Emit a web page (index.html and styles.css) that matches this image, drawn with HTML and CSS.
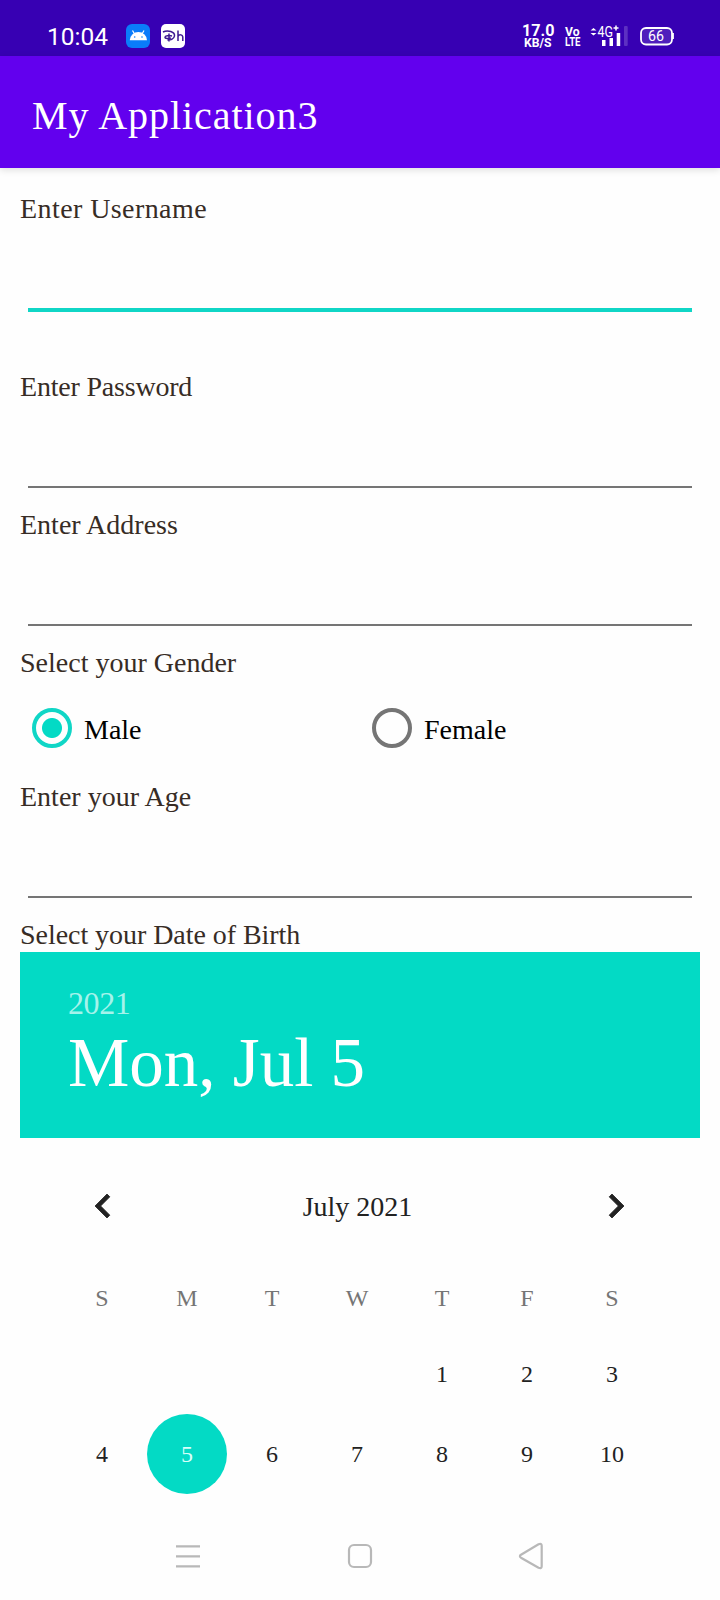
FILE: index.html
```html
<!DOCTYPE html>
<html lang="en">
<head>
<meta charset="utf-8">
<title>My Application3</title>
<link rel="stylesheet" href="styles.css">
</head>
<body>
<div class="screen">
  <header class="status">
    <div class="status-left">
      <span class="clock">10:04</span>
      <svg class="app-icon" width="24" height="24" viewBox="0 0 24 24">
        <rect width="24" height="24" rx="6" fill="#0a7cfa"/>
        <path d="M3.800 16.200a8.600 8.200 0 0 1 17.200 0z" fill="#fff"/>
        <path d="M6.500 6.500l2 3.500M18 6.500l-2 3.500" stroke="#fff" stroke-width="1.200"/>
        <circle cx="8.700" cy="13" r=".8" fill="#0a7cfa"/><circle cx="16" cy="13" r=".8" fill="#0a7cfa"/>
      </svg>
      <svg class="app-icon" width="24" height="24" viewBox="0 0 24 24">
        <rect width="24" height="24" rx="5" fill="#fff"/>
        <path d="M2 8C7 5.500 14 8 13.500 12c-.5 3.200-4.500 4.300-7 4M8 9.500v8M11 12c-3-.8-7-.3-7 1.300S8 15 10 13.800M17 6.500v10.500M17 12.500c.8-2.300 4.800-2.300 4.800.8V17" fill="none" stroke="#3d1a91" stroke-width="1.500"/>
      </svg>
    </div>
    <svg class="signals" width="154" height="30" viewBox="520 20 154 30">
      <g fill="#fff" font-family="Roboto, sans-serif" font-weight="700">
        <text x="522" y="36" font-size="16" textLength="32.500" lengthAdjust="spacingAndGlyphs">17.0</text>
        <text x="524" y="47" font-size="12" textLength="27.500" lengthAdjust="spacingAndGlyphs">KB/S</text>
        <text x="565" y="36" font-size="13.500" textLength="14.500" lengthAdjust="spacingAndGlyphs">Vo</text>
        <text x="565" y="46" font-size="13" textLength="15.500" lengthAdjust="spacingAndGlyphs">LTE</text>
      </g>
      <g fill="#fff" font-family="Roboto, sans-serif">
        <text x="597.500" y="37" font-size="14" textLength="15.500" lengthAdjust="spacingAndGlyphs">4G</text>
        <text x="648" y="41" font-size="14.500" textLength="16" lengthAdjust="spacingAndGlyphs">66</text>
      </g>
      <path d="M590.500 30.500l3-2.600 3 2.600zM590.500 33l3 2.600 3-2.600z" fill="#fff"/>
      <path d="M613.500 28h5M616 25.500v5" fill="none" stroke="#fff" stroke-width="1.500"/>
      <path d="M602 40h3.500v6H602zM609.500 38h3.500v8h-3.500zM616.700 33h3.500v13h-3.500z" fill="#fff"/>
      <rect x="624" y="26" width="3.700" height="20" rx="1" fill="#5d30c2"/>
      <rect x="641" y="28" width="31" height="16.500" rx="5" fill="#fff" fill-opacity=".12" stroke="#fff" stroke-width="1.800"/>
      <path d="M673 33v6" stroke="#fff" stroke-width="1.800"/>
    </svg>
  </header>
  <div class="app-bar"><h1>My Application3</h1></div>

  <main class="form">
    <label class="label wide">Enter Username</label>
    <div class="field focused"></div>
    <label class="label tight">Enter Password</label>
    <div class="field"></div>
    <label class="label">Enter Address</label>
    <div class="field"></div>
    <label class="label">Select your Gender</label>
    <div class="radios">
      <div class="radio"><span class="ring on"></span><span>Male</span></div>
      <div class="radio"><span class="ring"></span><span>Female</span></div>
    </div>
    <label class="label">Enter your Age</label>
    <div class="field"></div>
    <label class="label birth">Select your Date of Birth</label>

    <section class="date-head">
      <div class="year">2021</div>
      <div class="date">Mon, Jul 5</div>
    </section>
    <section class="calendar">
      <div class="month">
        <svg width="48" height="48" viewBox="0 0 24 24"><path d="M15.410 7.410L14 6l-6 6 6 6 1.410-1.410L10.830 12z"/></svg>
        <span>July 2021</span>
        <svg width="48" height="48" viewBox="0 0 24 24"><path d="M10 6L8.590 7.410 13.170 12l-4.580 4.590L10 18l6-6z"/></svg>
      </div>
      <div class="week names"><span>S</span><span>M</span><span>T</span><span>W</span><span>T</span><span>F</span><span>S</span></div>
      <div class="week"><span></span><span></span><span></span><span></span><span>1</span><span>2</span><span>3</span></div>
      <div class="week"><span>4</span><span class="selected">5</span><span>6</span><span>7</span><span>8</span><span>9</span><span>10</span></div>
    </section>
  </main>

  <nav class="nav">
    <svg width="28" height="28" viewBox="0 0 28 28"><path d="M2 4.300h24M2 14.300h24M2 24.300h24"/></svg>
    <svg width="28" height="28" viewBox="0 0 28 28"><rect x="3" y="3" width="22" height="22" rx="5"/></svg>
    <svg width="28" height="28" viewBox="0 0 28 28"><path d="M3 12.800L20.500 2.300q3.200-1.300 3.200 1.500v20.400q0 2.800-3.200 1.500L3 15.700q-2.200-1.500 0-2.900z"/></svg>
  </nav>
</div>
</body>
</html>
```
FILE: styles.css
```css
* { box-sizing: border-box; }
body {
  margin: 0;
  background: #fefefe;
  font-family: "Liberation Serif", serif;
}
.screen {
  width: 720px;
  height: 1600px;
  overflow: hidden;
  display: flex;
  flex-direction: column;
}
.status {
  height: 56px;
  flex: none;
  background: #3700b3;
  padding: 20px 46px 0 47px;
  display: flex;
  justify-content: space-between;
  align-items: flex-start;
}
.status-left { display: flex; height: 32px; align-items: center; }
.clock {
  width: 79px;
  font: 24.500px/32px Roboto, sans-serif;
  padding-top: 1px;
  color: #fff;
}
.app-icon { margin-right: 11px; }
.app-bar {
  height: 112px;
  flex: none;
  background: #6200ee;
  padding: 29px 32px;
  box-shadow: 0 2px 7px rgba(0, 0, 0, .13);
}
.app-bar h1 {
  margin: 0;
  color: #fff;
  font-size: 40px;
  font-weight: 400;
  line-height: 62px;
  letter-spacing: .95px;
}
.form {
  flex: 1;
  padding: 22px 20px 0;
  display: flex;
  flex-direction: column;
}
.label {
  height: 36px;
  flex: none;
  color: #372c25;
  font-size: 28px;
  line-height: 38px;
}
.wide { letter-spacing: .42px; }
.tight { letter-spacing: -.2px; }
.birth { letter-spacing: -.05px; }
.field {
  height: 84px;
  flex: none;
  margin: 0 8px 18px;
  border-bottom: 2px solid #757575;
}
.field.focused {
  height: 86px;
  margin-bottom: 56px;
  border-bottom: 4px solid #10d6c6;
}
.radios {
  height: 98px;
  display: grid;
  grid-template-columns: 1fr 1fr;
  padding: 28px 0 30px;
}
.radio {
  display: flex;
  gap: 12px;
  padding-left: 12px;
  color: #000;
  font-size: 28px;
  line-height: 43px;
}
.ring {
  width: 40px;
  height: 40px;
  border: 4px solid #757575;
  border-radius: 50%;
}
.ring.on {
  border-color: #10d6c6;
  background: radial-gradient(circle, #03dac5 9.500px, transparent 10.500px) border-box;
}
.date-head {
  height: 186px;
  flex: none;
  background: #03dac5;
  color: #fff;
  padding: 32px 48px;
}
.year {
  font-size: 32px;
  line-height: 38px;
  letter-spacing: -.4px;
  color: #a5f3eb;
}
.date {
  font-size: 69px;
  line-height: 82px;
}
.calendar { padding: 44px 39.500px 0; }
.month {
  height: 48px;
  display: flex;
  justify-content: space-between;
  padding: 0 21px 0 19px;
  color: #222;
  font-size: 28px;
  line-height: 49px;
}
.month span { margin-right: 3px; }
.month svg { fill: #222; stroke: #222; stroke-width: .4; }
.week {
  height: 80px;
  display: grid;
  grid-template-columns: repeat(7, 85px);
  justify-items: center;
  color: #222;
  font-size: 24px;
  line-height: 80px;
  text-align: center;
}
.names {
  height: 104px;
  padding-top: 28px;
  color: #757575;
}
.selected {
  width: 80px;
  height: 80px;
  border-radius: 50%;
  background: #03dac5;
  color: #d8fffa;
}
.nav {
  height: 98px;
  flex: none;
  display: flex;
  justify-content: space-between;
  padding: 40px 174px 0;
}
.nav svg { fill: none; stroke: #b8b8b8; stroke-width: 2.200; }
```
